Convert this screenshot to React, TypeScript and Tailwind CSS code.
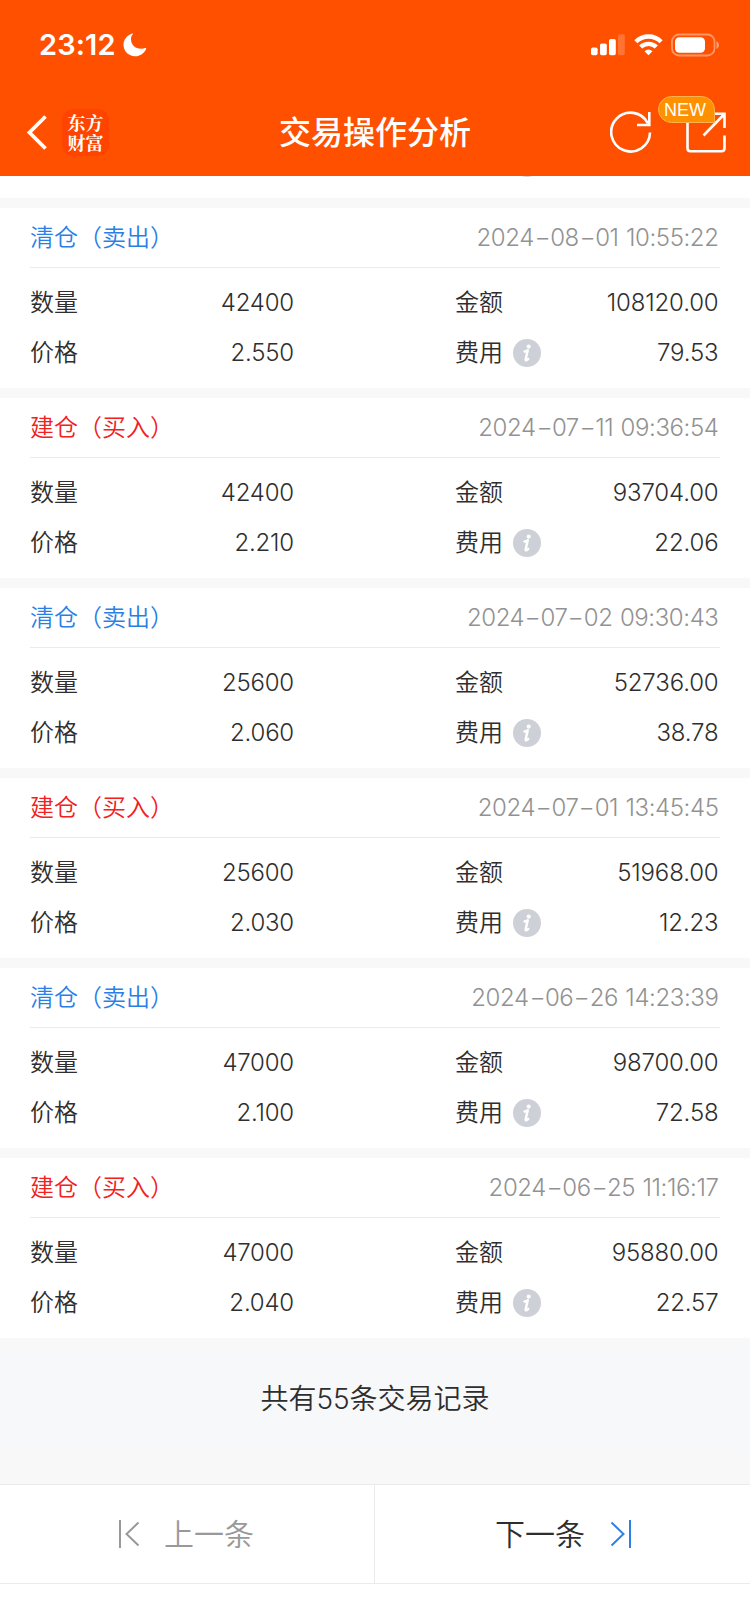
import React from "react";

interface TradeRecord {
  type: "sell" | "buy";
  time: string;
  quantity: string;
  price: string;
  amount: string;
  fee: string;
}

const records: TradeRecord[] = [
  { type: "sell", time: "2024-08-01 10:55:22", quantity: "42400", price: "2.550", amount: "108120.00", fee: "79.53" },
  { type: "buy", time: "2024-07-11 09:36:54", quantity: "42400", price: "2.210", amount: "93704.00", fee: "22.06" },
  { type: "sell", time: "2024-07-02 09:30:43", quantity: "25600", price: "2.060", amount: "52736.00", fee: "38.78" },
  { type: "buy", time: "2024-07-01 13:45:45", quantity: "25600", price: "2.030", amount: "51968.00", fee: "12.23" },
  { type: "sell", time: "2024-06-26 14:23:39", quantity: "47000", price: "2.100", amount: "98700.00", fee: "72.58" },
  { type: "buy", time: "2024-06-25 11:16:17", quantity: "47000", price: "2.040", amount: "95880.00", fee: "22.57" },
];

export default function App() {
  return (
    <div className="flex h-[1624px] w-[750px] flex-col overflow-hidden bg-white font-['Inter','Noto_Sans_CJK_SC',sans-serif] font-[350] text-[#2e2e2e]">
      <header className="h-[176px] shrink-0 bg-[#ff5000] text-white">
        <StatusBar />
        <NavBar />
      </header>
      <main>
        {/* Tail of the card scrolled under the header */}
        <div className="flex h-[22px] items-start overflow-hidden pl-[503px]">
          <div className="-mt-[27px]">
            <InfoIcon />
          </div>
        </div>
        {records.map((record) => (
          <TradeCard key={record.time} record={record} />
        ))}
        <div className="h-[146px] border-t-[10px] border-b-[32px] border-[#f8f8f8] bg-[#f7f8fa] pt-[29px] text-center text-[28px] leading-[44px]">
          共有<span className="tracking-[-0.1px]">55</span>条交易记录
        </div>
      </main>
      <footer className="flex h-[100px] shrink-0 border-y border-[#ebebeb] text-[30px]">
        <button className="flex w-[375px] items-center border-r border-[#ebebeb] pl-[118px] text-[#999999]">
          <svg width="22" height="28" viewBox="0 0 22 28" fill="none" stroke="currentColor" strokeWidth="2">
            <path d="M2 0v28M20.5 2.5L8.5 14l12 11.5" />
          </svg>
          <span className="ml-[24px]">上一条</span>
        </button>
        <button className="flex flex-1 items-center pl-[120px]">
          <span>下一条</span>
          <svg className="ml-[25px] text-[#2f80e4]" width="22" height="28" viewBox="0 0 22 28" fill="none" stroke="currentColor" strokeWidth="2">
            <path d="M20 0v28M1.5 2.5l12 11.5-12 11.5" />
          </svg>
        </button>
      </footer>
    </div>
  );
}

function StatusBar() {
  return (
    <div className="flex h-[88px] items-center pt-[2px] pr-[30px] pl-[39px]">
      <span className="text-[29px] font-semibold tracking-[0.1px]">23:12</span>
      <svg className="ml-[7px]" width="24" height="24" viewBox="0 0 24 24" fill="currentColor">
        <path d="M9.3 0.5C4.2 2 0.5 6.5 0.5 11.8c0 6.4 5.2 11.5 11.6 11.5 5 0 9.4-3.2 11-7.3.3-.8-.2-1.2-.9-.9-1.3.5-2.6.7-4 .7C12 15.8 8 11.6 8 6c0-1.6.5-3.3 1.8-4.7.5-.6.1-1-.5-.8z" />
      </svg>
      {/* Signal */}
      <svg className="ml-auto" width="34" height="22" viewBox="0 0 34 22" fill="currentColor">
        <rect x="0" y="13.5" width="6.6" height="7.8" rx="1.8" />
        <rect x="9" y="9.5" width="6.8" height="11.8" rx="1.8" />
        <rect x="18" y="5" width="6.8" height="16.3" rx="1.8" />
        <rect x="27" y="0.3" width="6.8" height="21" rx="1.8" opacity="0.2" />
      </svg>
      {/* Wifi */}
      <svg className="ml-[9px]" width="29" height="22" viewBox="0 0 29 22" fill="none" stroke="currentColor" strokeWidth="4.4">
        <path d="M1.9 7.7a18 18 0 0 1 25.2 0" />
        <path d="M6.7 13a11.3 11.3 0 0 1 15.6 0" />
        <path d="M14.5 21.3l-4-4.1a6.2 6.2 0 0 1 8 0z" fill="currentColor" stroke="none" />
      </svg>
      {/* Battery */}
      <svg className="ml-[8px]" width="49" height="24" viewBox="0 0 49 24">
        <rect x="1" y="1.5" width="42.5" height="21" rx="7" fill="none" stroke="#fff" strokeOpacity="0.4" strokeWidth="1.8" />
        <rect x="4" y="4.2" width="30" height="15.6" rx="4.5" fill="#fff" />
        <path d="M45.5 8.2c3.3 1.3 3.3 6.3 0 7.6z" fill="#fff" fillOpacity="0.45" />
      </svg>
    </div>
  );
}

function NavBar() {
  return (
    <div className="relative flex h-[88px] items-center">
      <svg className="ml-[26px]" width="22" height="36" viewBox="0 0 22 36" fill="none" stroke="currentColor" strokeWidth="3.8">
        <path d="M19.5 2.5l-16 16 16 16" />
      </svg>
      <div className="ml-[14px] flex h-[47px] w-[47px] items-center justify-center rounded-[11px] bg-[#ff4400] font-['Noto_Serif_CJK_SC','Noto_Sans_CJK_SC',serif] text-[18px] leading-[20px] font-bold">
        <span className="w-[36px]">东方财富</span>
      </div>
      <h1 className="absolute inset-x-0 mt-px text-center text-[32px] font-medium">交易操作分析</h1>
      <svg className="ml-auto" width="42" height="42" viewBox="0 0 42 42" fill="none" stroke="currentColor" strokeWidth="2.6">
        <path d="M40 21.5A19.4 19.4 0 1 1 38 12.5" />
        <path d="M39.3 1v13H27" />
      </svg>
      <svg className="mr-[24px] ml-[34px]" width="40" height="41" viewBox="0 0 40 41" fill="none" stroke="currentColor" strokeWidth="2.6">
        <path d="M12 1.8H1.5v34.4q0 3 3 3h31q3 0 3-3V23.5" />
        <path d="M26 1.8h12.5V16M38 2.5L17.5 23.5" />
      </svg>
      <span className="absolute top-[8px] right-[35px] flex h-[27px] w-[57px] items-center justify-center rounded-[13.5px] rounded-br-none border border-[#ffb24d] bg-[#ff9000] pr-[3px] font-['Liberation_Sans',sans-serif] text-[18px] leading-none">
        NEW
      </span>
    </div>
  );
}

function TradeCard({ record }: { record: TradeRecord }) {
  const isSell = record.type === "sell";
  return (
    <section className="h-[190px] border-t-[10px] border-[#f8f8f8] px-[30px] text-[24px]">
      <div className="flex h-[60px] items-center justify-between border-b border-[#ebebeb] pt-px">
        <span className={isSell ? "text-[#2a7fe6]" : "text-[#f22020]"}>
          {isSell ? "清仓（卖出）" : "建仓（买入）"}
        </span>
        <Timestamp value={record.time} />
      </div>
      <div className="pt-[10px]">
        <Row left="数量" leftValue={record.quantity} right="金额" rightValue={record.amount} />
        <Row left="价格" leftValue={record.price} right="费用" rightValue={record.fee} info />
      </div>
    </section>
  );
}

function Timestamp({ value }: { value: string }) {
  const parts = value.split("-");
  return (
    <span className="pr-[1.5px] tracking-[-0.4px] text-[#929292] [word-spacing:1px]">
      {parts.map((part, i) => (
        <React.Fragment key={i}>
          {i > 0 && <span className="mx-[2.9px] inline-block scale-x-[1.5]">-</span>}
          {part}
        </React.Fragment>
      ))}
    </span>
  );
}

interface RowProps {
  left: string;
  leftValue: string;
  right: string;
  rightValue: string;
  info?: boolean;
}

function Row({ left, leftValue, right, rightValue, info }: RowProps) {
  return (
    <div className="flex h-[50px] items-center">
      <span className="w-[100px]">{left}</span>
      <span className="w-[164px] text-right tracking-[-0.2px]">{leftValue}</span>
      <span className="ml-[161px]">{right}</span>
      {info && <InfoIcon />}
      <span className="ml-auto pr-[1.5px] tracking-[-0.15px]">{rightValue}</span>
    </div>
  );
}

function InfoIcon() {
  return (
    <svg className="ml-[10px]" width="28" height="28" viewBox="0 0 28 28">
      <circle cx="14" cy="14" r="14" fill="#cdd0d6" />
      <circle cx="15.7" cy="7.6" r="2.1" fill="#fff" />
      <path d="M11.5 12.4c1.4-.2 2.3-.6 3.2-1.2l-2 9c-.3 1.7 1 1.4 2.5-.2" fill="none" stroke="#fff" strokeWidth="2.5" strokeLinecap="round" strokeLinejoin="round" />
    </svg>
  );
}
